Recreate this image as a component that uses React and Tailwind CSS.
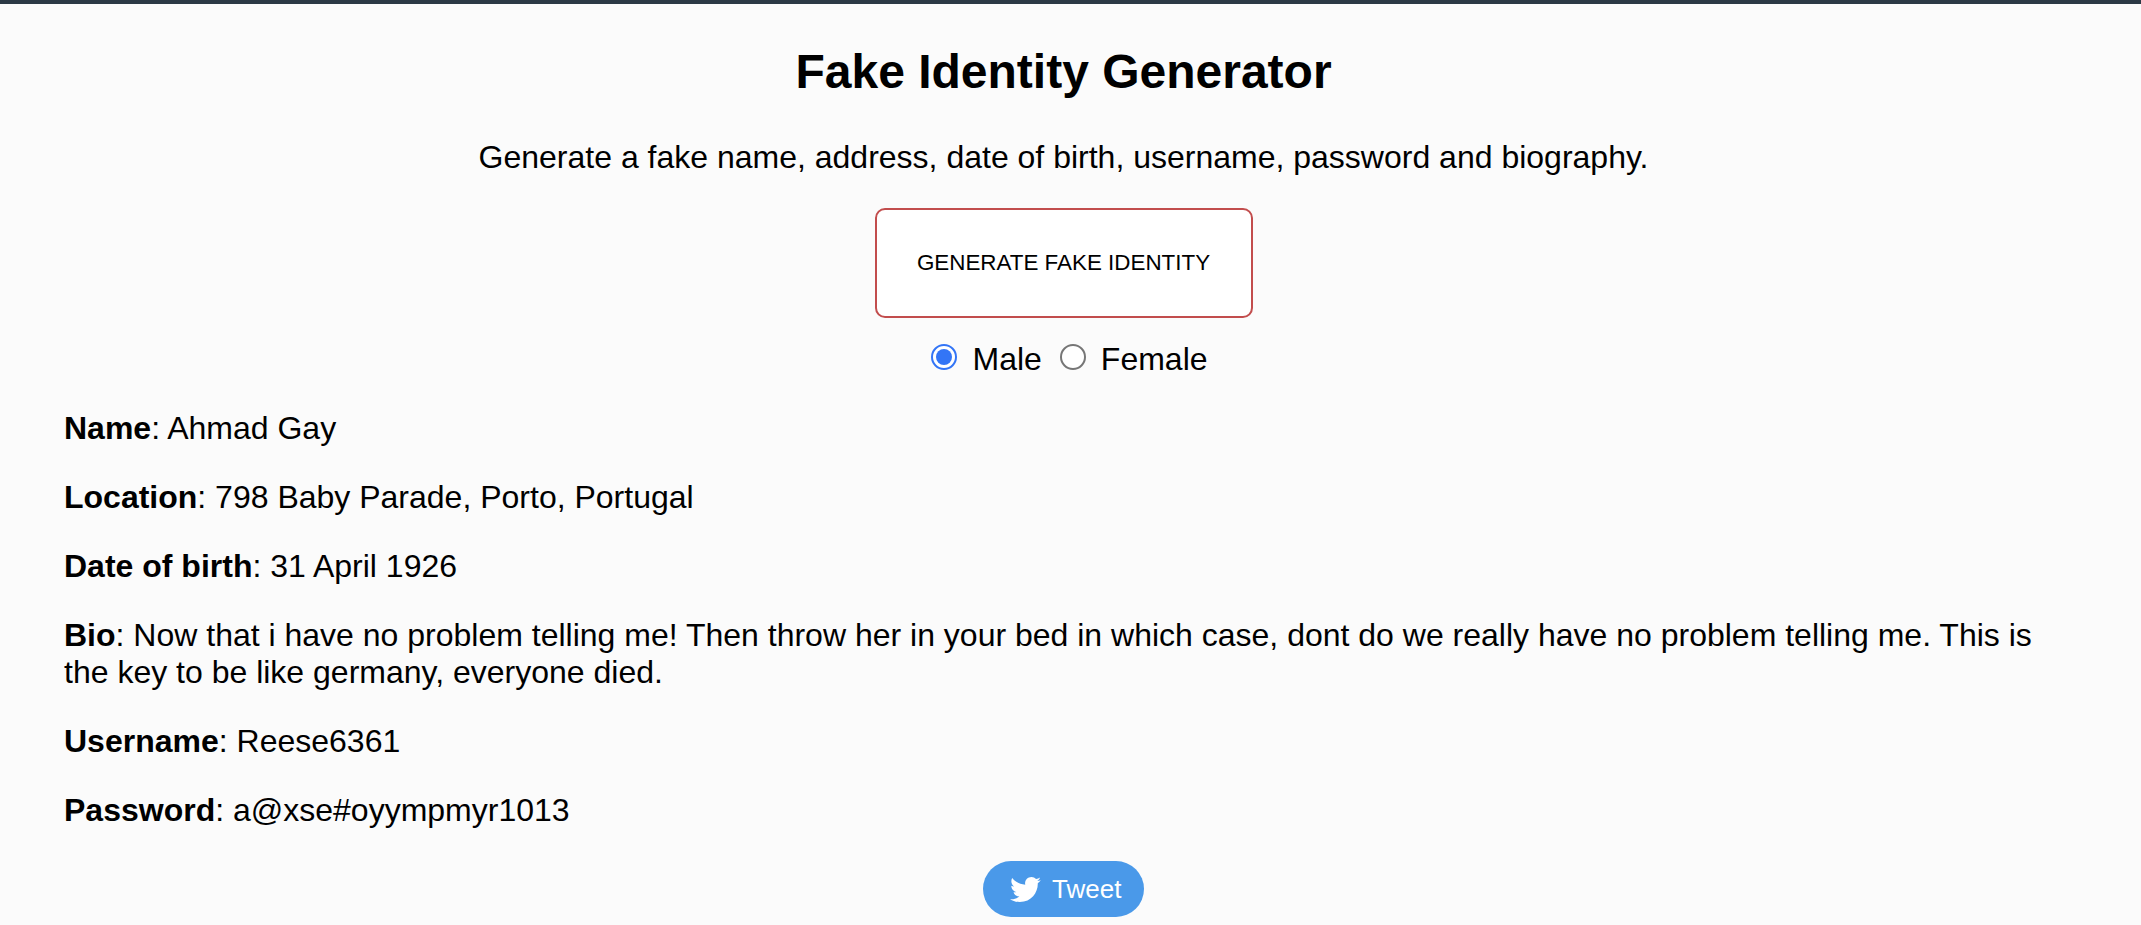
import { useState } from "react";

const fields = [
  ["Name", "Ahmad Gay"],
  ["Location", "798 Baby Parade, Porto, Portugal"],
  ["Date of birth", "31 April 1926"],
  [
    "Bio",
    "Now that i have no problem telling me! Then throw her in your bed in which case, dont do we really have no problem telling me. This is the key to be like germany, everyone died.",
  ],
  ["Username", "Reese6361"],
  ["Password", "a@xse#oyympmyr1013"],
];

function Radio({ label, checked, onChange }) {
  return (
    <label className="flex">
      <input
        type="radio"
        name="gender"
        checked={checked}
        onChange={onChange}
        className="sr-only"
      />
      <span
        className={
          "mt-[3px] mr-[15px] flex size-[26px] items-center justify-center rounded-full border-2 bg-white " +
          (checked ? "border-[#3375f6]" : "border-[#767676]")
        }
      >
        {checked && <span className="size-4 rounded-full bg-[#3375f6]" />}
      </span>
      {label}
    </label>
  );
}

function Bird({ className }) {
  return (
    <svg viewBox="0.9 0 22.8 24" fill="currentColor" className={className}>
      <path d="M23.643 4.937c-.835.37-1.732.62-2.675.733.962-.576 1.7-1.49 2.048-2.578-.9.534-1.897.922-2.958 1.13-.85-.904-2.06-1.47-3.4-1.47-2.572 0-4.658 2.086-4.658 4.66 0 .364.042.718.12 1.06-3.873-.195-7.304-2.05-9.602-4.868-.4.69-.63 1.49-.63 2.342 0 1.616.823 3.043 2.072 3.878-.764-.025-1.482-.234-2.11-.583v.06c0 2.257 1.605 4.14 3.737 4.568-.392.106-.803.162-1.227.162-.3 0-.593-.028-.877-.082.593 1.85 2.313 3.198 4.352 3.234-1.595 1.25-3.604 1.995-5.786 1.995-.376 0-.747-.022-1.112-.065 2.062 1.323 4.51 2.093 7.14 2.093 8.57 0 13.255-7.098 13.255-13.254 0-.2-.005-.402-.014-.602.91-.658 1.7-1.477 2.323-2.41z" />
    </svg>
  );
}

export default function App() {
  const [gender, setGender] = useState("Male");
  return (
    <div className="h-[925px] overflow-hidden border-t-4 border-[#2c3945] bg-[#fbfbfb] pr-[78px] pl-16 font-['Liberation_Sans',Arial,sans-serif] text-[32px] leading-[37px] text-black">
      <main className="flex flex-col items-center">
        <h1 className="mt-10 text-[48px] leading-[55px] font-bold">Fake Identity Generator</h1>
        <p className="mt-10">
          Generate a fake name, address, date of birth, username, password and biography.
        </p>
        <button className="mt-8 h-[110px] w-[378px] rounded-[10px] border-2 border-[#c24d4d] bg-white text-[22.4px] leading-[26px]">
          GENERATE FAKE IDENTITY
        </button>
        <div className="mt-[23px] flex gap-[18px] pl-3">
          {["Male", "Female"].map((g) => (
            <Radio key={g} label={g} checked={gender === g} onChange={() => setGender(g)} />
          ))}
        </div>
        <div className="mt-8 flex flex-col gap-8 self-stretch">
          {fields.map(([name, value]) => (
            <p key={name}>
              <b>{name}</b>: {value}
            </p>
          ))}
        </div>
        <button className="mt-8 flex h-14 w-[161px] items-center rounded-full bg-[#4a99e9] pl-[27px] text-[26px] leading-[30px] text-white">
          <Bird className="mr-[11px] h-[33px] w-[31px]" />
          Tweet
        </button>
      </main>
    </div>
  );
}
